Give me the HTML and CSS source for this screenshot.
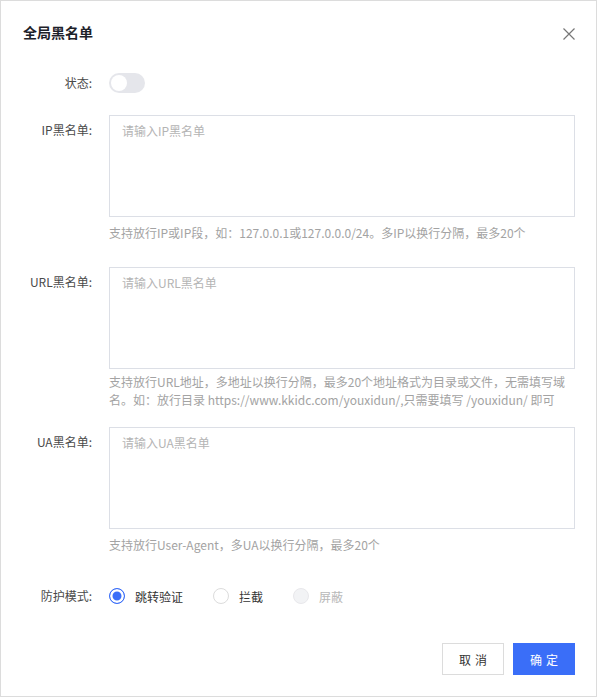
FILE: index.html
```html
<!DOCTYPE html>
<html lang="zh-CN">
<head>
<meta charset="utf-8">
<title>全局黑名单</title>
<link rel="stylesheet" href="styles.css">
</head>
<body>
<div class="dialog">
  <div class="header">
    <span class="title">全局黑名单</span>
    <span class="close">
      <svg width="12" height="12" viewBox="0 0 12 12"><path d="M0.5 0.5 L11.5 11.5 M11.5 0.5 L0.5 11.5" stroke="#777" stroke-width="1.2" fill="none"/></svg>
    </span>
  </div>
  <div class="form">
    <div class="item item-status">
      <label class="label label-mid">状态:</label>
      <div class="control"><span class="switch"><span class="knob"></span></span></div>
    </div>
    <div class="item item-ip">
      <label class="label label-top">IP黑名单:</label>
      <div class="control">
        <textarea class="textarea" placeholder="请输入IP黑名单"></textarea>
        <div class="help">支持放行IP或IP段，如：127.0.0.1或127.0.0.0/24。多IP以换行分隔，最多20个</div>
      </div>
    </div>
    <div class="item item-url">
      <label class="label label-top">URL黑名单:</label>
      <div class="control">
        <textarea class="textarea" placeholder="请输入URL黑名单"></textarea>
        <div class="help help-tight">支持放行URL地址，多地址以换行分隔，最多20个地址格式为目录或文件，无需填写域名。如：放行目录 https://www.kkidc.com/youxidun/,只需要填写 /youxidun/ 即可</div>
      </div>
    </div>
    <div class="item item-ua">
      <label class="label label-top">UA黑名单:</label>
      <div class="control">
        <textarea class="textarea" placeholder="请输入UA黑名单"></textarea>
        <div class="help">支持放行User-Agent，多UA以换行分隔，最多20个</div>
      </div>
    </div>
    <div class="item item-mode">
      <label class="label label-radio">防护模式:</label>
      <div class="control radios">
        <span class="radio-item"><span class="radio checked"></span><span class="radio-text">跳转验证</span></span>
        <span class="radio-item"><span class="radio"></span><span class="radio-text">拦截</span></span>
        <span class="radio-item disabled"><span class="radio"></span><span class="radio-text">屏蔽</span></span>
      </div>
    </div>
  </div>
  <div class="footer">
    <button class="btn btn-default">取消</button>
    <button class="btn btn-primary">确定</button>
  </div>
</div>
</body>
</html>
```

FILE: styles.css
```css
html, body {
  margin: 0;
  padding: 0;
  background: #fff;
}
body {
  font-family: "Noto Sans CJK SC", "Microsoft YaHei", sans-serif;
  font-size: 12px;
  color: #333;
}
.dialog {
  box-sizing: border-box;
  width: 597px;
  height: 697px;
  border: 1px solid #dcdcdc;
  display: flex;
  flex-direction: column;
}
.header {
  display: flex;
  justify-content: space-between;
  align-items: flex-start;
  padding: 19px 21px 0 22px;
}
.title {
  font-size: 14px;
  font-weight: bold;
  line-height: 24px;
  color: #1d2129;
}
.close {
  display: block;
  width: 12px;
  height: 12px;
  margin-top: 8px;
}
.close svg { display: block; }
.form {
  display: flex;
  flex-direction: column;
}
.item {
  display: flex;
  align-items: flex-start;
}
.item-status { margin-top: 29px; }
.item-ip { margin-top: 22px; }
.item-url { margin-top: 25px; }
.item-ua { margin-top: 18px; }
.item-mode { margin-top: 26px; }
.label {
  width: 91px;
  margin-right: 17px;
  text-align: right;
  color: #4a4a4a;
  font-size: 12px;
  flex-shrink: 0;
}
.label-mid { line-height: 20px; }
.label-top { line-height: 18px; padding-top: 6px; }
.label-radio { line-height: 32px; }
.control {
  width: 466px;
}
.switch {
  display: block;
  position: relative;
  width: 36px;
  height: 20px;
  border-radius: 10px;
  background: #e5e6eb;
}
.knob {
  position: absolute;
  left: 2px;
  top: 2px;
  width: 16px;
  height: 16px;
  border-radius: 50%;
  background: #fff;
}
.textarea {
  display: block;
  box-sizing: border-box;
  width: 466px;
  height: 102px;
  margin: 0;
  border: 1px solid #dcdfe6;
  border-radius: 0;
  padding: 6px 12px;
  font-family: inherit;
  font-size: 12px;
  line-height: 18px;
  color: #333;
  resize: none;
  outline: none;
}
.textarea::placeholder { color: #b4b4b4; }
.help {
  margin-top: 7px;
  font-size: 12px;
  line-height: 18px;
  color: #a3a3a3;
}
.help-tight { margin-top: 4px; }
.radios {
  display: flex;
  align-items: center;
  height: 32px;
  gap: 30px;
}
.radio-item {
  display: flex;
  align-items: center;
  gap: 10px;
  color: #333;
}
.radio {
  box-sizing: border-box;
  width: 16px;
  height: 16px;
  border-radius: 50%;
  border: 1px solid #dcdcdc;
  background: #fff;
}
.radio.checked {
  border-color: #3a6ef8;
  background: #3a6ef8;
  box-shadow: inset 0 0 0 2.5px #fff;
}
.radio-item.disabled .radio {
  background: #f2f3f5;
  border-color: #e8e8eb;
}
.radio-item.disabled .radio-text { color: #b8b8b8; }
.footer {
  display: flex;
  justify-content: flex-end;
  gap: 9px;
  margin-top: 31px;
  padding-right: 21px;
}
.btn {
  box-sizing: border-box;
  width: 62px;
  height: 32px;
  margin: 0;
  padding: 0 0 0 4px;
  font-family: inherit;
  font-size: 12px;
  letter-spacing: 4px;
  border-radius: 0;
  cursor: pointer;
}
.btn-default {
  background: #fff;
  border: 1px solid #dcdcdc;
  color: #333;
}
.btn-primary {
  background: #3a6ef8;
  border: 1px solid #3a6ef8;
  color: #fff;
}
```
